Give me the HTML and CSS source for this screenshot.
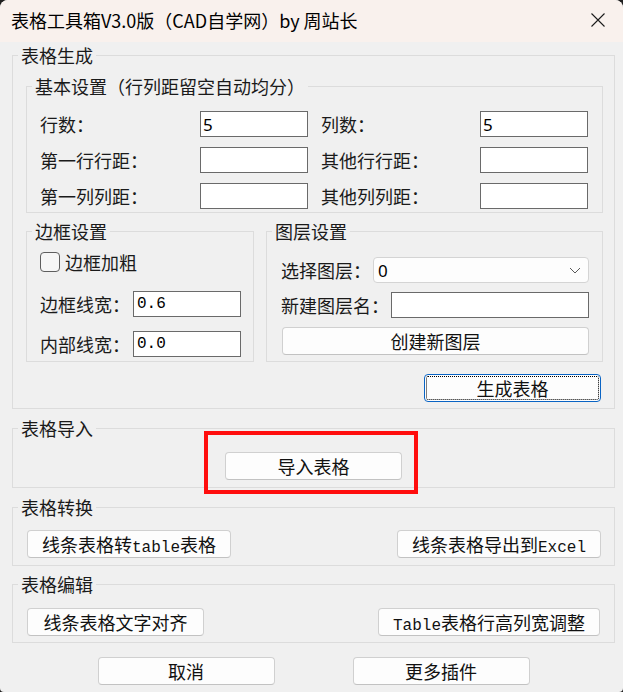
FILE: index.html
```html
<!DOCTYPE html>
<html lang="zh-CN">
<head>
<meta charset="utf-8">
<title>表格工具箱V3.0版</title>
<link rel="stylesheet" href="styles.css">
</head>
<body>
<div class="window">
  <header class="titlebar">
    <span class="title">表格工具箱V3.0版（CAD自学网）by 周站长</span>
    <span class="close" aria-label="关闭">
      <svg width="16" height="16" viewBox="0 0 16 16"><path d="M1.5 1.5L14.5 14.5M14.5 1.5L1.5 14.5" stroke="#1c1c1c" stroke-width="1.1" fill="none"/></svg>
    </span>
  </header>

  <main class="content">
    <fieldset class="group g-gen">
      <legend>表格生成</legend>

      <fieldset class="group g-basic">
        <legend>基本设置（行列距留空自动均分）</legend>
        <div class="grid4">
          <label>行数：</label><input class="num" value="5">
          <label class="l2">列数：</label><input class="num" value="5">
          <label>第一行行距：</label><input class="num" value="">
          <label class="l2">其他行行距：</label><input class="num" value="">
          <label>第一列列距：</label><input class="num" value="">
          <label class="l2">其他列列距：</label><input class="num" value="">
        </div>
      </fieldset>

      <div class="pair">
        <fieldset class="group g-border">
          <legend>边框设置</legend>
          <div class="gb-body">
            <div class="check-row"><span class="checkbox"></span><span class="check-label">边框加粗</span></div>
            <div class="field-row fr1"><label>边框线宽：</label><input class="mono" value="0.6"></div>
            <div class="field-row fr2"><label>内部线宽：</label><input class="mono" value="0.0"></div>
          </div>
        </fieldset>

        <fieldset class="group g-layer">
          <legend>图层设置</legend>
          <div class="gl-body">
            <div class="layer-row"><label class="lw1">选择图层：</label>
              <div class="combo"><span class="combo-val">0</span>
                <svg class="chev" width="12" height="7" viewBox="0 0 12 7"><path d="M1 1L6 6L11 1" stroke="#5a5a5a" stroke-width="1" fill="none"/></svg>
              </div>
            </div>
            <div class="layer-row lr2"><label class="lw2">新建图层名：</label><input class="num grow" value=""></div>
            <button class="btn btn-create">创建新图层</button>
          </div>
        </fieldset>
      </div>

      <div class="gen-row"><button class="btn btn-gen">生成表格</button></div>
    </fieldset>

    <fieldset class="group g-import">
      <legend>表格导入</legend>
      <div class="center-row">
        <div class="import-wrap">
          <button class="btn w177">导入表格</button>
          <span class="highlight"></span>
        </div>
      </div>
    </fieldset>

    <fieldset class="group g-convert">
      <legend>表格转换</legend>
      <div class="btn-row conv">
        <button class="btn w204">线条表格转<span class="lat">table</span>表格</button>
        <button class="btn w204">线条表格导出到<span class="lat">Excel</span></button>
      </div>
    </fieldset>

    <fieldset class="group g-edit">
      <legend>表格编辑</legend>
      <div class="btn-row edit">
        <button class="btn w177">线条表格文字对齐</button>
        <button class="btn w222"><span class="lat">Table</span>表格行高列宽调整</button>
      </div>
    </fieldset>

    <div class="footer">
      <button class="btn w177">取消</button>
      <button class="btn w177">更多插件</button>
    </div>
  </main>
</div>
</body>
</html>
```

FILE: styles.css
```css
* { box-sizing: border-box; }
html, body { margin: 0; padding: 0; }
body {
  background: #202020;
  width: 623px;
  height: 692px;
  overflow: hidden;
  font-family: "Noto Sans CJK SC", "Noto Sans", sans-serif;
  color: #1a1a1a;
}
.window {
  width: 623px;
  height: 692px;
  background: #f0f0f0;
  border-radius: 8px 8px 4px 4px;
  overflow: hidden;
  display: flex;
  flex-direction: column;
}
.titlebar {
  height: 42px;
  flex: none;
  background: #f9f1ed;
  display: flex;
  align-items: center;
  justify-content: space-between;
  padding: 0 0 3px 11px;
}
.title { font-size: 18px; line-height: 24px; color: #000; white-space: nowrap; }
.close { width: 50px; height: 39px; display: flex; align-items: center; justify-content: center; }

.content { padding: 3px 8px 0 12px; }

.group { border: 1px solid #dcdcdc; margin: 0; padding: 0; min-width: 0; }
.group > legend { margin-left: 5px; padding: 0 3px; font-size: 18px; line-height: 20px; color: #1a1a1a; }

label { font-size: 18px; line-height: 26px; white-space: nowrap; }

input {
  font: inherit;
  margin: 0;
  height: 26px;
  border: 1px solid #6a6a6a;
  background: #fff;
  color: #000;
  outline: none;
  padding: 0 2px;
  border-radius: 0;
}
input.num { font-family: "Noto Sans", sans-serif; font-size: 17px; }
input.mono { font-family: "Liberation Mono", monospace; font-size: 16px; padding-left: 3px; }

/* 基本设置 */
.g-basic { margin: 11px 11px 0 13px; }
.grid4 {
  display: grid;
  grid-template-columns: 160px 108px 172px 108px;
  grid-auto-rows: 26px;
  row-gap: 10px;
  align-items: center;
  padding: 15px 13px 3px 13px;
}
.grid4 input { width: 108px; }
.grid4 .l2 { padding-left: 13px; }

/* 边框 / 图层 */
.pair { display: flex; gap: 12px; margin: 8px 11px 0 13px; }
.g-border { width: 228px; flex: none; }
.g-layer { flex: 1; }
.gb-body { padding: 0 0 4px 13px; }
.gl-body { padding: 0 13px 6px 14px; }

.check-row { display: flex; align-items: center; height: 20px; margin-top: 11px; }
.checkbox {
  width: 20px; height: 20px;
  border: 1px solid #5e5e5e;
  border-radius: 4px;
  background: #f6f6f6;
  flex: none;
}
.check-label { font-size: 18px; margin-left: 5px; line-height: 20px; }

.field-row { display: flex; align-items: center; }
.field-row label { width: 93px; }
.field-row input { width: 108px; }
.fr1 { margin-top: 19px; }
.fr2 { margin-top: 14px; }

.layer-row { display: flex; align-items: center; margin-top: 16px; }
.lr2 { margin-top: 9px; }
.lw1 { width: 92px; flex: none; }
.lw2 { width: 110px; flex: none; }
.grow { flex: 1; min-width: 0; }
.combo {
  flex: 1;
  height: 26px;
  border: 1px solid #d4d4d4;
  border-radius: 4px;
  background: #fdfdfd;
  display: flex;
  align-items: center;
  justify-content: space-between;
  padding: 0 7px 0 4px;
}
.combo-val { font-family: "Noto Sans", sans-serif; font-size: 17px; color: #000; }

/* buttons */
.btn {
  display: block;
  font-family: "Noto Sans CJK SC", sans-serif;
  font-size: 18px;
  line-height: 26px;
  color: #111;
  background: #fdfdfd;
  border: 1px solid #d0d0d0;
  border-bottom-color: #c2c2c2;
  border-radius: 4px;
  height: 28px;
  padding: 0;
  margin: 0;
  text-align: center;
  white-space: nowrap;
}
.lat { font-family: "Liberation Mono", monospace; font-size: 16px; }
.btn-create { width: 307px; margin-top: 9px; margin-left: 1px; }
.gen-row { display: flex; justify-content: flex-end; margin: 12px 13px 6px 0; }
.btn-gen {
  width: 177px;
  border: 1px solid #0a64c4;
  outline: 1px dotted #000;
  outline-offset: -3px;
}
.w177 { width: 177px; }
.w204 { width: 204px; }
.w222 { width: 222px; }

/* 表格导入 */
.g-import { margin-top: 9px; padding: 14px 0 7px; }
.center-row { display: flex; justify-content: center; }
.import-wrap { position: relative; }
.highlight {
  position: absolute;
  left: -21px;
  top: -21px;
  width: 214px;
  height: 63px;
  border: 4px solid #ff0d0d;
  pointer-events: none;
}

/* 表格转换 / 编辑 */
.g-convert { margin-top: 9px; padding: 13px 0 7px; }
.g-edit { margin-top: 8px; padding: 14px 0 6px; }
.btn-row { display: flex; justify-content: space-between; }
.conv { padding: 0 13px 0 14px; }
.edit { padding: 0 14px 0 14px; }

.footer { display: flex; justify-content: center; gap: 78px; margin-top: 14px; }
```
